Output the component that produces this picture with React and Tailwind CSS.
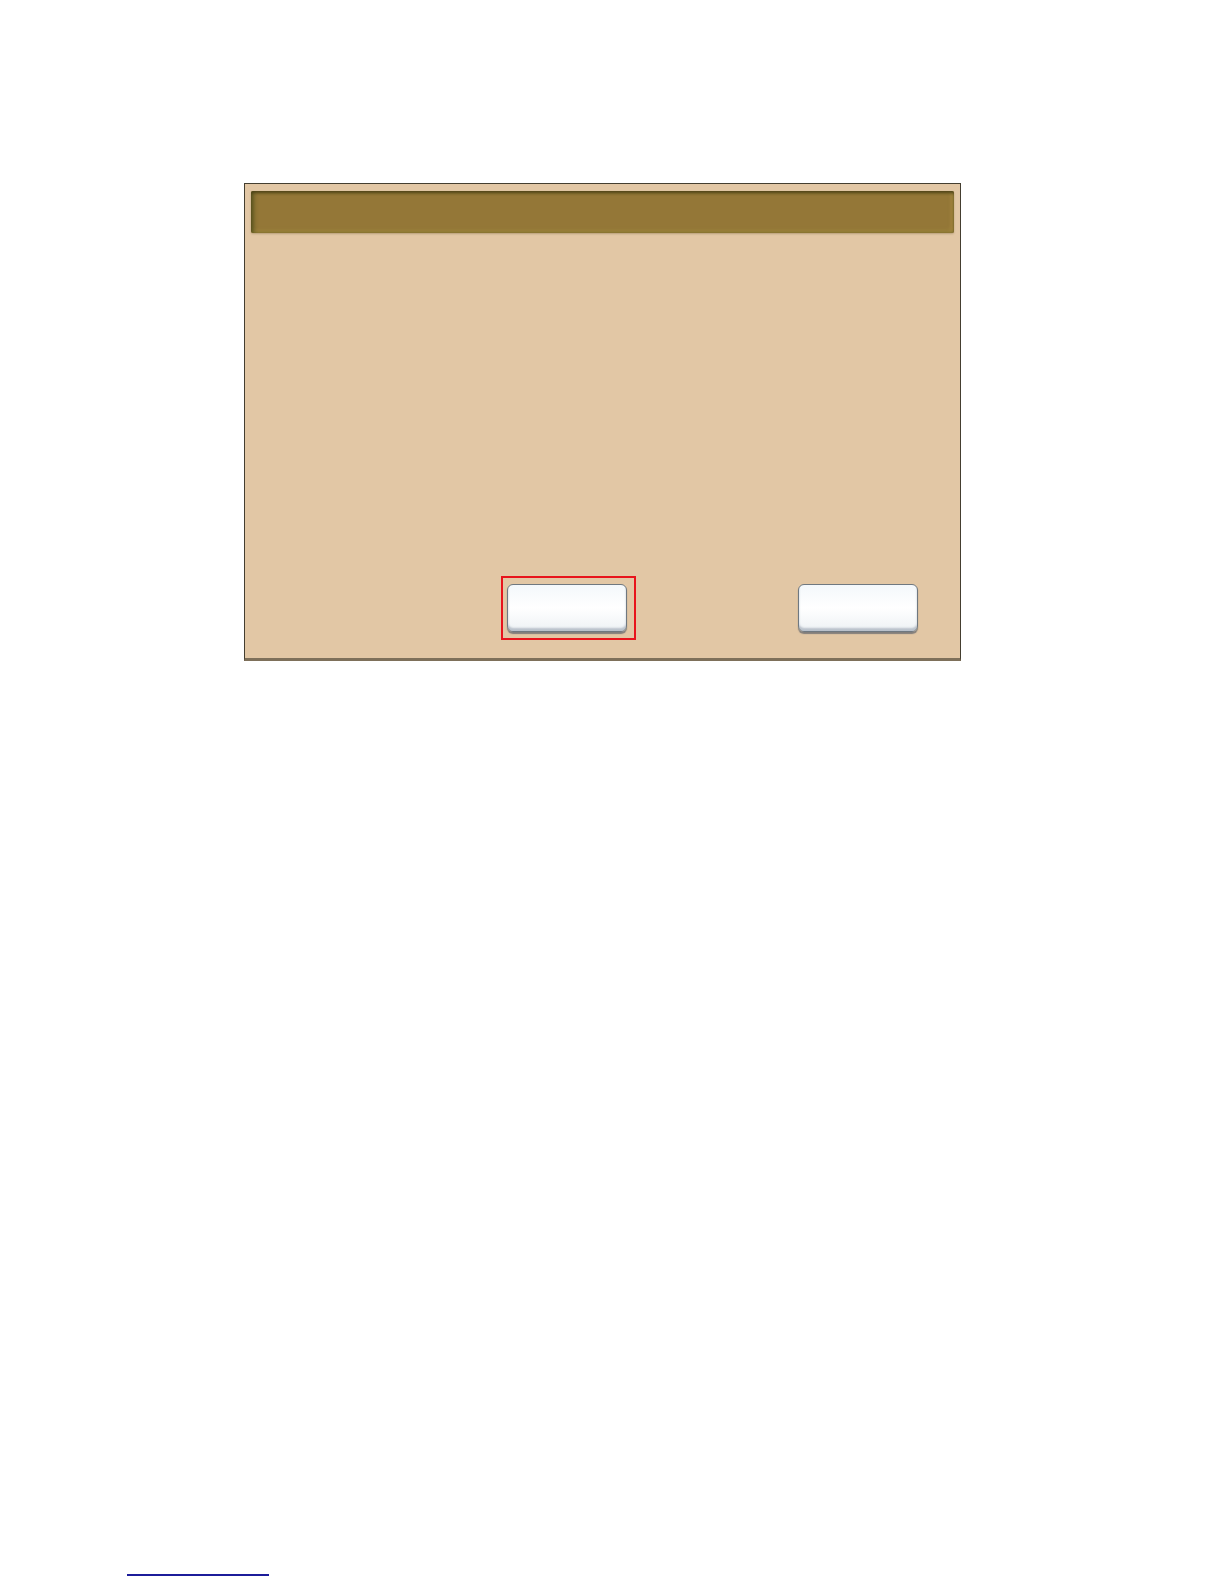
export default function App() {
  return (
    <div className="min-h-[1584px] w-[1224px] bg-white font-['Liberation_Sans',sans-serif]">
      <div className="pt-[183px] pl-[244px]">
        {/* dialog panel */}
        <div className="flex h-[478px] w-[717px] flex-col border border-[#443e30] border-b-[3px] border-b-[#7e705a] bg-[#e2c7a5]">
          <div className="px-[6px] pt-[7px]">
            <div className="h-[42px] rounded-[2px] bg-[#947737] shadow-[inset_0_2px_3px_rgba(70,60,20,0.8),inset_3px_0_4px_rgba(60,70,20,0.6),inset_-2px_-2px_4px_rgba(200,170,80,0.5),0_1px_2px_rgba(120,100,60,0.4)]" />
          </div>
          <div className="flex-1" />
          <div className="flex items-start pb-[18px] pl-[256px]">
            <div className="border-2 border-[#e8141c] py-[6px] pl-[4px] pr-[7px]">
              <Btn />
            </div>
            <div className="ml-[162px] pt-[8px]">
              <Btn />
            </div>
          </div>
        </div>
      </div>
      <div className="ml-[127px] mt-[913px] h-[2px] w-[142px] bg-[#1c1c9a]" />
    </div>
  );
}

function Btn() {
  return (
    <button className="block h-[48px] w-[120px] rounded-[6px] border border-[#6f7880] bg-gradient-to-b from-[#f4f8fb] via-[#ffffff] to-[#eef2f5] shadow-[inset_0_-3px_2px_rgba(150,160,175,0.6),0_2px_1px_rgba(90,95,105,0.7)]" />
  );
}
